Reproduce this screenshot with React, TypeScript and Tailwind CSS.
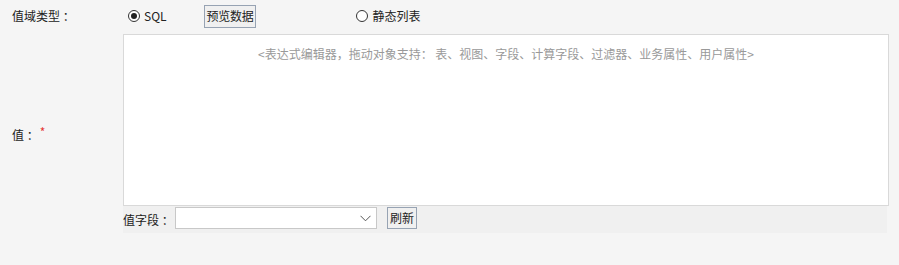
import { useState } from 'react'

const font = { fontFamily: '"Noto Sans CJK SC", "Noto Sans", sans-serif' }

const Radio = ({ checked, label, onClick }: { checked: boolean; label: string; onClick: () => void }) => (
  <label className="flex items-center gap-[4px] cursor-pointer" onClick={onClick}>
    <span className="w-[12px] h-[12px] rounded-full border border-[#333] bg-white flex items-center justify-center">
      {checked && <span className="w-[6px] h-[6px] rounded-full bg-[#222]" />}
    </span>
    <span className="text-[12px] text-[#222]">{label}</span>
  </label>
)

export default function App() {
  const [mode, setMode] = useState('sql')
  const [expr, setExpr] = useState('')

  return (
    <div className="w-[899px] h-[265px] bg-[#f5f5f5] text-[12px] text-[#222]" style={font}>
      {/* value type row */}
      <div className="flex items-center h-[34px]">
        <div className="w-[123px] pl-[12px] pb-[2px]">值域类型 ：</div>
        <div className="flex items-center pl-[5px] pb-[2px]">
          <Radio checked={mode === 'sql'} label="SQL" onClick={() => setMode('sql')} />
          <button className="ml-[37px] h-[23px] px-[2px] border border-[#97a3b3] bg-[#f0f0f0] text-[12px] leading-none tracking-[-0.3px]">
            预览数据
          </button>
          <div className="ml-[100px]">
            <Radio checked={mode === 'list'} label="静态列表" onClick={() => setMode('list')} />
          </div>
        </div>
      </div>

      {/* value row */}
      <div className="flex">
        <div className="w-[123px] pl-[12px] flex items-center pt-[2px]">
          值 ：<span className="text-[#e53935] ml-[1px] -mt-[6px]">*</span>
        </div>
        <div className="flex flex-col">
          <div className="w-[766px] h-[172px] bg-white border border-[#d9d9d9]">
            <textarea
              className="w-full h-full resize-none outline-none bg-transparent px-2 pt-[10px] text-center text-[12px] text-[#999] placeholder:text-[#999]"
              placeholder="<表达式编辑器，拖动对象支持： 表、视图、字段、计算字段、过滤器、业务属性、用户属性>"
              value={expr}
              onChange={(e) => setExpr(e.target.value)}
            />
          </div>
          <div className="w-[764px] h-[27px] bg-[#f0f0f0] flex items-center">
            <span className="w-[52px]">值字段 ：</span>
            <div className="relative w-[202px] h-[22px] bg-white border border-[#c8c8c8] mb-[3px]">
              <svg className="absolute right-[5px] top-[7px]" width="11" height="7" viewBox="0 0 11 7" fill="none">
                <path d="M0.5 0.8L5.5 5.8L10.5 0.8" stroke="#555" strokeWidth="1" />
              </svg>
            </div>
            <button className="ml-[10px] mb-[3px] h-[22px] w-[30px] border border-[#97a3b3] bg-[#f0f0f0] text-[12px] leading-none">
              刷新
            </button>
          </div>
        </div>
      </div>
    </div>
  )
}
